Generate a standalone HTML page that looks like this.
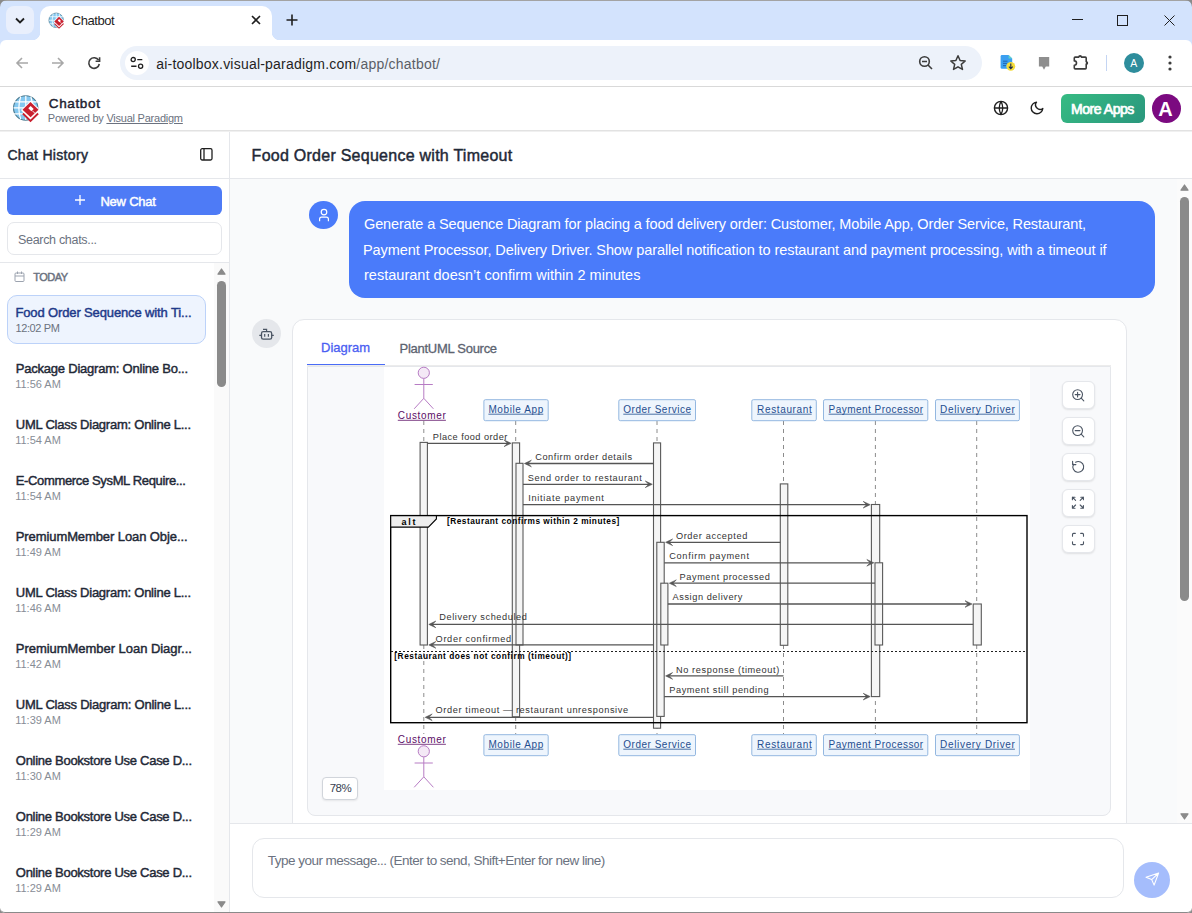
<!DOCTYPE html>
<html><head><meta charset="utf-8">
<style>
*{box-sizing:border-box;margin:0;padding:0}
html,body{width:1192px;height:913px;overflow:hidden;background:#fff;font-family:"Liberation Sans",sans-serif;position:relative}
.a{position:absolute}
.t{position:absolute;white-space:nowrap;line-height:1}
svg{position:absolute;overflow:visible}
</style></head>
<body>
<!-- ============ BROWSER CHROME ============ -->
<div class="a" style="left:0;top:0;width:1192px;height:48px;background:#d3e3fd;border-top:1px solid #a3a3a3"></div>
<!-- tab search button -->
<div class="a" style="left:6px;top:6px;width:28px;height:28px;border-radius:8px;background:#e9effc"></div>
<svg style="left:14px;top:14px" width="12" height="12"><path d="M2 4.5 L6 8.5 L10 4.5" fill="none" stroke="#1f1f1f" stroke-width="1.8"/></svg>
<!-- active tab -->
<div class="a" style="left:40px;top:6px;width:232px;height:40px;background:#fff;border-radius:10px 10px 0 0"></div>
<div class="a" style="left:32px;top:32px;width:8px;height:8px;background:radial-gradient(circle at 0 0,#d3e3fd 8px,#fff 8.6px)"></div>
<div class="a" style="left:272px;top:32px;width:8px;height:8px;background:radial-gradient(circle at 8px 0,#d3e3fd 8px,#fff 8.6px)"></div>
<!-- favicon --><svg style="left:48px;top:12px" width="17" height="17" viewBox="11.5 93.5 28.5 28.5"><circle cx="25.2" cy="107.4" r="12.2" fill="#84c8f0" stroke="#4d7b90" stroke-width="1.1"/><path d="M13.5 101.4H37M13 107.4H37.5M13.5 113.3H37M25.3 95.3V119.5M20.2 96Q16.5 107.4 20.2 118.8M30.3 96Q34 107.4 30.3 118.8" stroke="#fff" stroke-width="1.2" fill="none"/><path d="M30 100L39.5 109.4L30 122.3L20.5 109.4Z" fill="#fff"/><path d="M30 101.6L38 109.3L30.1 116.8L22 109.3Z" fill="#c9202f"/><path d="M30.2 105.4L33.2 108.4L30.8 110.8L27.8 107.8Z" fill="#fff"/><path d="M31.8 110.2L35 113.4" stroke="#fff" stroke-width="0.9"/><path d="M22.4 113L30 120.4L37.6 113" fill="none" stroke="#c9202f" stroke-width="1.9"/></svg>
<div class="t" id="tabtitle" style="left:71.80px;top:14px;font-size:13px;letter-spacing:-0.433px;color:#1f1f1f">Chatbot</div>
<svg style="left:251px;top:15px" width="10" height="10"><path d="M1 1L9 9M9 1L1 9" stroke="#1f1f1f" stroke-width="1.6"/></svg>
<svg style="left:286px;top:14px" width="12" height="12"><path d="M6 0.5V11.5M0.5 6H11.5" stroke="#1f1f1f" stroke-width="1.6"/></svg>
<!-- window controls -->
<div class="a" style="left:1072px;top:19px;width:11px;height:1px;background:#1f1f1f"></div>
<svg style="left:1117px;top:15px" width="11" height="11"><rect x="0.5" y="0.5" width="10" height="10" fill="none" stroke="#1f1f1f" stroke-width="1"/></svg>
<svg style="left:1164px;top:15px" width="11" height="11"><path d="M0.5 0.5L10.5 10.5M10.5 0.5L0.5 10.5" stroke="#1f1f1f" stroke-width="1"/></svg>

<!-- toolbar -->
<div class="a" style="left:0;top:40px;width:1192px;height:46px;background:#fff;border-radius:6px 6px 0 0"></div>
<div class="a" style="left:0;top:86px;width:1192px;height:1px;background:#d9d9d9"></div>
<svg style="left:15px;top:56px" width="14" height="14"><path d="M13 7H2M7 2L2 7L7 12" fill="none" stroke="#a8a8a8" stroke-width="1.6"/></svg>
<svg style="left:51px;top:56px" width="14" height="14"><path d="M1 7H12M7 2L12 7L7 12" fill="none" stroke="#a8a8a8" stroke-width="1.6"/></svg>
<svg style="left:87px;top:56px" width="14" height="14"><path d="M11.6 4.2A5.3 5.3 0 1 0 12.3 8" fill="none" stroke="#3c3c3c" stroke-width="1.6"/><path d="M12.6 1.2V5.2H8.6" fill="none" stroke="#3c3c3c" stroke-width="1.6"/></svg>
<div class="a" style="left:120px;top:46px;width:862px;height:34px;border-radius:17px;background:#edf2fa"></div>
<div class="a" style="left:125px;top:51px;width:24px;height:24px;border-radius:12px;background:#fff"></div>
<svg style="left:129px;top:55px" width="16" height="16"><circle cx="4.2" cy="4.6" r="2.1" fill="none" stroke="#1f1f1f" stroke-width="1.3"/><path d="M8.3 4.6H13.3M2.2 11.3H7.5" stroke="#1f1f1f" stroke-width="1.4"/><circle cx="11.6" cy="11.3" r="2.1" fill="none" stroke="#1f1f1f" stroke-width="1.3"/></svg>
<div class="t" id="url" style="left:156.20px;top:57px;font-size:14px;letter-spacing:0.214px;color:#1f1f1f">ai-toolbox.visual-paradigm.com<span style="color:#5b5e66">/app/chatbot/</span></div>
<svg style="left:918px;top:55px" width="16" height="16"><circle cx="6.5" cy="6.5" r="4.8" fill="none" stroke="#3c3c3c" stroke-width="1.6"/><path d="M4 6.5H9M10 10L14 14" stroke="#3c3c3c" stroke-width="1.6"/></svg>
<svg style="left:949px;top:54px" width="18" height="18"><path d="M9 1.8L11.1 6.5L16.2 7L12.3 10.4L13.5 15.4L9 12.8L4.5 15.4L5.7 10.4L1.8 7L6.9 6.5Z" fill="none" stroke="#3c3c3c" stroke-width="1.5" stroke-linejoin="round"/></svg>
<!-- extension icons -->
<svg style="left:995px;top:50px" width="25" height="25" viewBox="995 50 25 25"><path d="M1002 55H1008.6L1012.2 58.6V67.4Q1012.2 68.8 1010.8 68.8H1002Q1000.6 68.8 1000.6 67.4V56.4Q1000.6 55 1002 55Z" fill="#3b9ff0"/><path d="M1008.6 55L1012.2 58.6H1008.6Z" fill="#5fd6c8"/><path d="M1003 61.2H1007.5M1003 63.4H1007.5M1003 65.6H1006" stroke="#1f5fa8" stroke-width="0.9"/><circle cx="1010.8" cy="66.3" r="4.4" fill="#f5dc3a"/><path d="M1010.8 63.4V68.4M1008.9 66.6L1010.8 68.6L1012.7 66.6" fill="none" stroke="#1e2a4a" stroke-width="1.1"/></svg>
<svg style="left:1035px;top:52px" width="18" height="20" viewBox="1035 52 18 20"><path d="M1038.9 56.9H1049.2V66.5H1045.8L1044 69.7L1042.2 66.5H1038.9Z" fill="#8e8e8e"/></svg>
<svg style="left:1068px;top:50px" width="25" height="25" viewBox="1068 50 25 25"><path d="M1075.2 57.1H1078.9A1.2 1.2 0 0 1 1081.3 57.1H1085.3Q1086.2 57.1 1086.2 58V61.7A1.2 1.2 0 0 1 1086.2 64.1V68Q1086.2 68.9 1085.3 68.9H1075.2Q1074.3 68.9 1074.3 68V65.3A2.2 2.2 0 0 0 1074.3 60.9V58Q1074.3 57.1 1075.2 57.1Z" fill="none" stroke="#3c3c3c" stroke-width="1.6" stroke-linejoin="round"/><path d="M1078.9 57.1A1.2 1.2 0 0 1 1081.3 57.1Z M1086.2 61.7A1.2 1.2 0 0 1 1086.2 64.1Z" fill="#3c3c3c"/></svg>
<div class="a" style="left:1106px;top:55px;width:1px;height:16px;background:#c4d5f3"></div>
<div class="a" style="left:1124px;top:53px;width:20px;height:20px;border-radius:10px;background:#2e8d9c"></div>
<div class="t" id="profA" style="left:1130.20px;top:58px;font-size:10.5px;letter-spacing:0.000px;color:#fff">A</div>
<svg style="left:1168px;top:55px" width="4" height="16"><circle cx="2" cy="2" r="1.6" fill="#3c3c3c"/><circle cx="2" cy="8" r="1.6" fill="#3c3c3c"/><circle cx="2" cy="14" r="1.6" fill="#3c3c3c"/></svg>

<!-- ============ APP HEADER ============ -->
<div class="a" style="left:0;top:87px;width:1192px;height:43px;background:#fff"></div>
<div class="a" style="left:0;top:130px;width:1192px;height:1px;background:#e2e2e2"></div>
<div class="a" style="left:0;top:131px;width:1192px;height:1px;background:#f0f0f0"></div>
<svg style="left:11.5px;top:93.5px" width="28.5" height="28.5" viewBox="11.5 93.5 28.5 28.5"><circle cx="25.2" cy="107.4" r="12.2" fill="#84c8f0" stroke="#4d7b90" stroke-width="1.1"/><path d="M13.5 101.4H37M13 107.4H37.5M13.5 113.3H37M25.3 95.3V119.5M20.2 96Q16.5 107.4 20.2 118.8M30.3 96Q34 107.4 30.3 118.8" stroke="#fff" stroke-width="1.2" fill="none"/><path d="M30 100L39.5 109.4L30 122.3L20.5 109.4Z" fill="#fff"/><path d="M30 101.6L38 109.3L30.1 116.8L22 109.3Z" fill="#c9202f"/><path d="M30.2 105.4L33.2 108.4L30.8 110.8L27.8 107.8Z" fill="#fff"/><path d="M31.8 110.2L35 113.4" stroke="#fff" stroke-width="0.9"/><path d="M22.4 113L30 120.4L37.6 113" fill="none" stroke="#c9202f" stroke-width="1.9"/></svg>
<div class="t" id="appname" style="left:48.80px;top:97px;font-size:13.5px;letter-spacing:0.633px;font-weight:normal;-webkit-text-stroke:0.45px currentColor;color:#1e2230">Chatbot</div>
<div class="t" id="powered" style="left:47.80px;top:113px;font-size:11px;letter-spacing:-0.232px;color:#6b7280">Powered by <span style="text-decoration:underline">Visual Paradigm</span></div>
<svg style="left:993px;top:100px" width="16" height="16" viewBox="0 0 16 16"><circle cx="8" cy="8" r="6.6" fill="none" stroke="#1f1f1f" stroke-width="1.4"/><path d="M1.5 8H14.5M8 1.4Q4.5 8 8 14.6M8 1.4Q11.5 8 8 14.6" fill="none" stroke="#1f1f1f" stroke-width="1.3"/></svg>
<svg style="left:1030px;top:101px" width="14" height="14" viewBox="0 0 14 14"><path d="M6.5 1.2A5.8 5.8 0 1 0 12.8 7.5A4.5 4.5 0 0 1 6.5 1.2Z" fill="none" stroke="#1f1f1f" stroke-width="1.4" stroke-linejoin="round"/></svg>
<div class="a" style="left:1061px;top:94px;width:84px;height:29px;border-radius:6px;background:linear-gradient(135deg,#36bb83,#2a977d)"></div>
<div class="t" id="moreapps" style="left:1071.00px;top:102px;font-size:14px;letter-spacing:-0.450px;font-weight:normal;-webkit-text-stroke:0.7px currentColor;color:#fff">More Apps</div>
<div class="a" style="left:1152px;top:94px;width:29px;height:29px;border-radius:50%;background:#7b0a80"></div>
<div class="t" id="avA" style="left:1158.20px;top:99px;font-size:20px;letter-spacing:0.000px;font-weight:bold;color:#fff">A</div>

<!-- ============ SIDEBAR ============ -->
<div class="a" style="left:0;top:132px;width:229px;height:781px;background:#fff"></div>
<div class="a" style="left:229px;top:132px;width:1px;height:781px;background:#e5e7eb"></div>
<div class="t" id="chathist" style="left:7.40px;top:148px;font-size:14px;letter-spacing:0.318px;font-weight:normal;-webkit-text-stroke:0.45px currentColor;color:#1f2937">Chat History</div>
<svg style="left:200px;top:148px" width="13" height="13"><rect x="0.7" y="0.7" width="11.3" height="11.3" rx="1.5" fill="none" stroke="#1f1f1f" stroke-width="1.3"/><path d="M4 1V12" stroke="#1f1f1f" stroke-width="1.3"/></svg>
<div class="a" style="left:0;top:178px;width:229px;height:1px;background:#e5e7eb"></div>
<div class="a" style="left:7px;top:186px;width:215px;height:29px;border-radius:6px;background:#4e7bf6"></div>
<svg style="left:75px;top:195px" width="10" height="10"><path d="M5 0V10M0 5H10" stroke="#fff" stroke-width="1.3"/></svg>
<div class="t" id="newchat" style="left:100.40px;top:195px;font-size:13px;letter-spacing:-0.214px;font-weight:normal;-webkit-text-stroke:0.45px currentColor;color:#fff">New Chat</div>
<div class="a" style="left:7px;top:222px;width:215px;height:33px;border-radius:7px;border:1px solid #e5e7eb;background:#fff"></div>
<div class="t" id="search" style="left:18.00px;top:234px;font-size:12.5px;letter-spacing:-0.307px;color:#6b7280">Search chats...</div>
<div class="a" style="left:0;top:262px;width:229px;height:1px;background:#e5e7eb"></div>
<svg style="left:14px;top:271px" width="11" height="11"><rect x="1" y="2" width="9" height="8.5" rx="1" fill="none" stroke="#9ca3af" stroke-width="1"/><path d="M1 5H10M3.5 0.5V3M7.5 0.5V3" stroke="#9ca3af" stroke-width="1"/></svg>
<div class="t" id="today" style="left:33.20px;top:272px;font-size:11px;letter-spacing:-0.500px;font-weight:normal;-webkit-text-stroke:0.45px currentColor;color:#6b7280">TODAY</div>
<!-- sidebar scrollbar -->
<div class="a" style="left:214px;top:263px;width:15px;height:650px;background:#fafafa"></div>
<svg style="left:217px;top:268px" width="9" height="7"><path d="M4.5 1L8 6.2H1Z" fill="#8a8a8a" stroke="#8a8a8a" stroke-width="1.2" stroke-linejoin="round"/></svg>
<div class="a" style="left:217px;top:281px;width:9px;height:106px;border-radius:4.5px;background:#8a8a8a"></div>
<svg style="left:217px;top:901px" width="9" height="7"><path d="M1 0.8H8L4.5 6Z" fill="#8a8a8a" stroke="#8a8a8a" stroke-width="1.2" stroke-linejoin="round"/></svg>
<!-- active item -->
<div class="a" style="left:7px;top:295px;width:199px;height:49px;border-radius:10px;background:#eef4fe;border:1px solid #bcd2f9"></div>
<div class="t" id="it0" style="left:15.40px;top:306px;font-size:13px;letter-spacing:-0.128px;font-weight:normal;-webkit-text-stroke:0.45px currentColor;color:#1e3a8a">Food Order Sequence with Ti...</div>
<div class="t" id="tm0" style="left:15.40px;top:323px;font-size:11px;letter-spacing:-0.357px;color:#6b7280">12:02 PM</div>
<div id="items">
<div class="t" id="it1" style="left:15.80px;top:362px;font-size:13px;letter-spacing:-0.221px;font-weight:normal;-webkit-text-stroke:0.45px currentColor;color:#1f2937">Package Diagram: Online Bo...</div>
<div class="t" id="tm1" style="left:15.20px;top:379px;font-size:11px;letter-spacing:0.000px;color:#878d96">11:56 AM</div>
<div class="t" id="it2" style="left:15.80px;top:418px;font-size:13px;letter-spacing:-0.241px;font-weight:normal;-webkit-text-stroke:0.45px currentColor;color:#1f2937">UML Class Diagram: Online L...</div>
<div class="t" id="tm2" style="left:15.20px;top:435px;font-size:11px;letter-spacing:0.000px;color:#878d96">11:54 AM</div>
<div class="t" id="it3" style="left:15.80px;top:474px;font-size:13px;letter-spacing:-0.358px;font-weight:normal;-webkit-text-stroke:0.45px currentColor;color:#1f2937">E-Commerce SysML Require...</div>
<div class="t" id="tm3" style="left:15.20px;top:491px;font-size:11px;letter-spacing:0.000px;color:#878d96">11:54 AM</div>
<div class="t" id="it4" style="left:15.80px;top:530px;font-size:13px;letter-spacing:-0.096px;font-weight:normal;-webkit-text-stroke:0.45px currentColor;color:#1f2937">PremiumMember Loan Obje...</div>
<div class="t" id="tm4" style="left:15.20px;top:547px;font-size:11px;letter-spacing:0.000px;color:#878d96">11:49 AM</div>
<div class="t" id="it5" style="left:15.80px;top:586px;font-size:13px;letter-spacing:-0.241px;font-weight:normal;-webkit-text-stroke:0.45px currentColor;color:#1f2937">UML Class Diagram: Online L...</div>
<div class="t" id="tm5" style="left:15.20px;top:603px;font-size:11px;letter-spacing:0.000px;color:#878d96">11:46 AM</div>
<div class="t" id="it6" style="left:15.80px;top:642px;font-size:13px;letter-spacing:-0.038px;font-weight:normal;-webkit-text-stroke:0.45px currentColor;color:#1f2937">PremiumMember Loan Diagr...</div>
<div class="t" id="tm6" style="left:15.20px;top:659px;font-size:11px;letter-spacing:0.000px;color:#878d96">11:42 AM</div>
<div class="t" id="it7" style="left:15.80px;top:698px;font-size:13px;letter-spacing:-0.228px;font-weight:normal;-webkit-text-stroke:0.45px currentColor;color:#1f2937">UML Class Diagram: Online L...</div>
<div class="t" id="tm7" style="left:15.20px;top:715px;font-size:11px;letter-spacing:0.000px;color:#878d96">11:39 AM</div>
<div class="t" id="it8" style="left:15.80px;top:754px;font-size:13px;letter-spacing:-0.276px;font-weight:normal;-webkit-text-stroke:0.45px currentColor;color:#1f2937">Online Bookstore Use Case D...</div>
<div class="t" id="tm8" style="left:15.20px;top:771px;font-size:11px;letter-spacing:0.000px;color:#878d96">11:30 AM</div>
<div class="t" id="it9" style="left:15.80px;top:810px;font-size:13px;letter-spacing:-0.276px;font-weight:normal;-webkit-text-stroke:0.45px currentColor;color:#1f2937">Online Bookstore Use Case D...</div>
<div class="t" id="tm9" style="left:15.20px;top:827px;font-size:11px;letter-spacing:0.000px;color:#878d96">11:29 AM</div>
<div class="t" id="it10" style="left:15.80px;top:866px;font-size:13px;letter-spacing:-0.276px;font-weight:normal;-webkit-text-stroke:0.45px currentColor;color:#1f2937">Online Bookstore Use Case D...</div>
<div class="t" id="tm10" style="left:15.20px;top:883px;font-size:11px;letter-spacing:0.000px;color:#878d96">11:29 AM</div>
</div>

<!-- ============ MAIN ============ -->
<div class="a" style="left:230px;top:132px;width:962px;height:46px;background:#fff"></div>
<div class="a" style="left:230px;top:178px;width:962px;height:1px;background:#e5e7eb"></div>
<div class="t" id="title" style="left:251.60px;top:148px;font-size:16px;letter-spacing:0.258px;font-weight:normal;-webkit-text-stroke:0.45px currentColor;color:#1f2937">Food Order Sequence with Timeout</div>
<div class="a" style="left:230px;top:179px;width:962px;height:644px;background:#f9fafb"></div>
<!-- main scrollbar -->
<div class="a" style="left:1177px;top:179px;width:15px;height:644px;background:#fbfbfb"></div>
<svg style="left:1180px;top:184px" width="9" height="7"><path d="M4.5 1L8 6.2H1Z" fill="#8a8a8a" stroke="#8a8a8a" stroke-width="1.2" stroke-linejoin="round"/></svg>
<div class="a" style="left:1180px;top:197px;width:9px;height:404px;border-radius:4.5px;background:#8a8a8a"></div>
<svg style="left:1180px;top:813px" width="9" height="7"><path d="M1 0.8H8L4.5 6Z" fill="#8a8a8a" stroke="#8a8a8a" stroke-width="1.2" stroke-linejoin="round"/></svg>

<!-- user message -->
<div class="a" style="left:309px;top:200.7px;width:29px;height:28.5px;border-radius:50%;background:#4a7bfa"></div>
<svg style="left:300px;top:195px" width="45" height="40" viewBox="300 195 45 40"><circle cx="324" cy="212.1" r="2.8" fill="none" stroke="#fff" stroke-width="1.2"/><path d="M319.6 221.2V219.2Q319.6 217.2 321.6 217.2H326.4Q328.4 217.2 328.4 219.2V221.2" fill="none" stroke="#fff" stroke-width="1.2"/></svg>
<div class="a" style="left:349px;top:201px;width:806px;height:97px;border-radius:16px;background:#4a7bfa"></div>
<div class="t" id="msg1" style="left:364.00px;top:217px;font-size:14.5px;letter-spacing:-0.147px;color:#fff">Generate a Sequence Diagram for placing a food delivery order: Customer, Mobile App, Order Service, Restaurant,</div>
<div class="t" id="msg2" style="left:363.00px;top:243px;font-size:14.5px;letter-spacing:-0.078px;color:#fff">Payment Processor, Delivery Driver. Show parallel notification to restaurant and payment processing, with a timeout if</div>
<div class="t" id="msg3" style="left:364.00px;top:268px;font-size:14.5px;letter-spacing:0.019px;color:#fff">restaurant doesn’t confirm within 2 minutes</div>

<!-- bot -->
<div class="a" style="left:252px;top:319px;width:29px;height:29px;border-radius:50%;background:#e5e7eb"></div>
<svg style="left:250px;top:320px" width="30" height="30" viewBox="250 320 30 30"><rect x="261.5" y="331.7" width="10.2" height="7.5" rx="1.8" fill="none" stroke="#4b5563" stroke-width="1.3"/><path d="M266.6 331.7V329.3H263M259.3 335.4H261.5M271.7 335.4H273.8M264.7 334V336.8M268.4 334V336.8" fill="none" stroke="#4b5563" stroke-width="1.2"/></svg>
<div class="a" style="left:292px;top:319px;width:835px;height:530px;border-radius:12px;background:#fff;border:1px solid #e5e7eb"></div>
<div class="a" style="left:307px;top:365px;width:804px;height:1px;background:#ececec"></div>
<div class="a" style="left:307px;top:363.6px;width:78px;height:1.6px;background:#4a6cf7"></div>
<div class="t" id="tabdiag" style="left:321.00px;top:341px;font-size:13px;letter-spacing:0.000px;color:#4a5ef2;-webkit-text-stroke:0.3px currentColor">Diagram</div>
<div class="t" id="tabsrc" style="left:399.60px;top:342px;font-size:13px;letter-spacing:-0.279px;color:#5c6370;-webkit-text-stroke:0.3px currentColor">PlantUML Source</div>
<div class="a" style="left:307px;top:366px;width:804px;height:450px;background:#f8f9fb;border:1px solid #e5e7eb;border-radius:0 0 8px 8px"></div>
<div class="a" style="left:384px;top:367px;width:646px;height:423px;background:#fff"></div>
<div id="diagram"><svg style="left:384px;top:367px" width="646" height="423" viewBox="0 0 646 423" font-family="Liberation Sans, sans-serif">
<line x1="39.8" y1="54" x2="39.8" y2="367" stroke="#8c8c8c" stroke-width="1" stroke-dasharray="4,4"/>
<line x1="131.7" y1="54" x2="131.7" y2="367" stroke="#8c8c8c" stroke-width="1" stroke-dasharray="4,4"/>
<line x1="273.0" y1="54" x2="273.0" y2="367" stroke="#8c8c8c" stroke-width="1" stroke-dasharray="4,4"/>
<line x1="399.5" y1="54" x2="399.5" y2="367" stroke="#8c8c8c" stroke-width="1" stroke-dasharray="4,4"/>
<line x1="491.4" y1="54" x2="491.4" y2="367" stroke="#8c8c8c" stroke-width="1" stroke-dasharray="4,4"/>
<line x1="592.7" y1="54" x2="592.7" y2="367" stroke="#8c8c8c" stroke-width="1" stroke-dasharray="4,4"/>
<rect x="99.9" y="32.7" width="64.3" height="21" rx="1.5" fill="#eef5fd" stroke="#93b7e0" stroke-width="1"/>
<text x="104.4" y="46" font-size="10" fill="#1f4e8f" textLength="54.9" lengthAdjust="spacing">Mobile App</text>
<line x1="104.4" y1="47.2" x2="159.3" y2="47.2" stroke="#1f4e8f" stroke-width="0.8"/>
<rect x="234.8" y="32.7" width="76.7" height="21" rx="1.5" fill="#eef5fd" stroke="#93b7e0" stroke-width="1"/>
<text x="239.3" y="46" font-size="10" fill="#1f4e8f" textLength="67.7" lengthAdjust="spacing">Order Service</text>
<line x1="239.3" y1="47.2" x2="307.0" y2="47.2" stroke="#1f4e8f" stroke-width="0.8"/>
<rect x="367.8" y="32.7" width="64.5" height="21" rx="1.5" fill="#eef5fd" stroke="#93b7e0" stroke-width="1"/>
<text x="373.1" y="46" font-size="10" fill="#1f4e8f" textLength="54.6" lengthAdjust="spacing">Restaurant</text>
<line x1="373.1" y1="47.2" x2="427.7" y2="47.2" stroke="#1f4e8f" stroke-width="0.8"/>
<rect x="439.5" y="32.7" width="104.3" height="21" rx="1.5" fill="#eef5fd" stroke="#93b7e0" stroke-width="1"/>
<text x="444.6" y="46" font-size="10" fill="#1f4e8f" textLength="94.6" lengthAdjust="spacing">Payment Processor</text>
<line x1="444.6" y1="47.2" x2="539.2" y2="47.2" stroke="#1f4e8f" stroke-width="0.8"/>
<rect x="551.5" y="32.7" width="83.9" height="21" rx="1.5" fill="#eef5fd" stroke="#93b7e0" stroke-width="1"/>
<text x="556.1" y="46" font-size="10" fill="#1f4e8f" textLength="74.8" lengthAdjust="spacing">Delivery Driver</text>
<line x1="556.1" y1="47.2" x2="630.9" y2="47.2" stroke="#1f4e8f" stroke-width="0.8"/>
<rect x="99.9" y="367.7" width="64.3" height="21" rx="1.5" fill="#eef5fd" stroke="#93b7e0" stroke-width="1"/>
<text x="104.4" y="381" font-size="10" fill="#1f4e8f" textLength="54.9" lengthAdjust="spacing">Mobile App</text>
<line x1="104.4" y1="382.2" x2="159.3" y2="382.2" stroke="#1f4e8f" stroke-width="0.8"/>
<rect x="234.8" y="367.7" width="76.7" height="21" rx="1.5" fill="#eef5fd" stroke="#93b7e0" stroke-width="1"/>
<text x="239.3" y="381" font-size="10" fill="#1f4e8f" textLength="67.7" lengthAdjust="spacing">Order Service</text>
<line x1="239.3" y1="382.2" x2="307.0" y2="382.2" stroke="#1f4e8f" stroke-width="0.8"/>
<rect x="367.8" y="367.7" width="64.5" height="21" rx="1.5" fill="#eef5fd" stroke="#93b7e0" stroke-width="1"/>
<text x="373.1" y="381" font-size="10" fill="#1f4e8f" textLength="54.6" lengthAdjust="spacing">Restaurant</text>
<line x1="373.1" y1="382.2" x2="427.7" y2="382.2" stroke="#1f4e8f" stroke-width="0.8"/>
<rect x="439.5" y="367.7" width="104.3" height="21" rx="1.5" fill="#eef5fd" stroke="#93b7e0" stroke-width="1"/>
<text x="444.6" y="381" font-size="10" fill="#1f4e8f" textLength="94.6" lengthAdjust="spacing">Payment Processor</text>
<line x1="444.6" y1="382.2" x2="539.2" y2="382.2" stroke="#1f4e8f" stroke-width="0.8"/>
<rect x="551.5" y="367.7" width="83.9" height="21" rx="1.5" fill="#eef5fd" stroke="#93b7e0" stroke-width="1"/>
<text x="556.1" y="381" font-size="10" fill="#1f4e8f" textLength="74.8" lengthAdjust="spacing">Delivery Driver</text>
<line x1="556.1" y1="382.2" x2="630.9" y2="382.2" stroke="#1f4e8f" stroke-width="0.8"/>
<circle cx="39.8" cy="5.8" r="5.6" fill="#f4e9f6" stroke="#b77cc4" stroke-width="1"/>
<line x1="39.8" y1="11.6" x2="39.8" y2="31.3" stroke="#b77cc4" stroke-width="1"/>
<line x1="30.6" y1="17.5" x2="48.8" y2="17.5" stroke="#b77cc4" stroke-width="1"/>
<path d="M30.2 41.8 L39.8 31.3 L49.4 41.8" fill="none" stroke="#b77cc4" stroke-width="1"/>
<circle cx="39.8" cy="384.3" r="5.6" fill="#f4e9f6" stroke="#b77cc4" stroke-width="1"/>
<line x1="39.8" y1="390.1" x2="39.8" y2="409.8" stroke="#b77cc4" stroke-width="1"/>
<line x1="30.6" y1="396.0" x2="48.8" y2="396.0" stroke="#b77cc4" stroke-width="1"/>
<path d="M30.2 420.3 L39.8 409.8 L49.4 420.3" fill="none" stroke="#b77cc4" stroke-width="1"/>
<text x="13.8" y="52" font-size="10" fill="#5c0d66" textLength="48.1" lengthAdjust="spacing">Customer</text>
<line x1="13.8" y1="53.3" x2="61.9" y2="53.3" stroke="#5c0d66" stroke-width="0.8"/>
<text x="13.8" y="376" font-size="10" fill="#5c0d66" textLength="48.1" lengthAdjust="spacing">Customer</text>
<line x1="13.8" y1="377.3" x2="61.9" y2="377.3" stroke="#5c0d66" stroke-width="0.8"/>
<rect x="36.1" y="75.4" width="7.3" height="202.6" fill="#f5f5f5" stroke="#595959" stroke-width="1.1"/>
<rect x="128.3" y="75.9" width="7.3" height="273.9" fill="#f5f5f5" stroke="#595959" stroke-width="1.1"/>
<rect x="132.0" y="96.3" width="7.0" height="181.7" fill="#f5f5f5" stroke="#595959" stroke-width="1.1"/>
<rect x="269.5" y="75.9" width="7.1" height="285.3" fill="#f5f5f5" stroke="#595959" stroke-width="1.1"/>
<rect x="272.8" y="175.3" width="7.4" height="174.1" fill="#f5f5f5" stroke="#595959" stroke-width="1.1"/>
<rect x="276.8" y="216.2" width="7.1" height="61.8" fill="#f5f5f5" stroke="#595959" stroke-width="1.1"/>
<rect x="396.3" y="116.9" width="7.5" height="161.4" fill="#f5f5f5" stroke="#595959" stroke-width="1.1"/>
<rect x="487.4" y="137.5" width="8.3" height="192.1" fill="#f5f5f5" stroke="#595959" stroke-width="1.1"/>
<rect x="491.0" y="195.8" width="7.6" height="82.2" fill="#f5f5f5" stroke="#595959" stroke-width="1.1"/>
<rect x="589.2" y="237.0" width="8.1" height="41.0" fill="#f5f5f5" stroke="#595959" stroke-width="1.1"/>
<rect x="6.7" y="148.6" width="636.3" height="207.1" fill="none" stroke="#000" stroke-width="1.4"/>
<path d="M6.7 148.6 H52.4 V152 L44.4 160.1 H6.7 Z" fill="#eeeeee" stroke="#000" stroke-width="1.1"/>
<text x="17.4" y="157.6" font-size="9" font-weight="bold" fill="#000" textLength="14" lengthAdjust="spacing">alt</text>
<text x="62.9" y="157.4" font-size="8.3" font-weight="bold" fill="#000" textLength="172.4" lengthAdjust="spacing">[Restaurant confirms within 2 minutes]</text>
<line x1="7" y1="284.5" x2="642.5" y2="284.5" stroke="#222" stroke-width="1" stroke-dasharray="2,2"/>
<text x="10.3" y="291.9" font-size="8.3" font-weight="bold" fill="#000" textLength="176.8" lengthAdjust="spacing">[Restaurant does not confirm (timeout)]</text>
<line x1="43.4" y1="76.3" x2="125.1" y2="76.3" stroke="#555555" stroke-width="1.3"/>
<path d="M127.10000000000001 76.3 L120.1 73.0 L123.5 76.3 L120.1 79.6 Z" fill="#555555" stroke="#555555" stroke-width="0.6" stroke-linejoin="round"/>
<text x="48.8" y="72.9" font-size="9.2" fill="#333333" textLength="74.5" lengthAdjust="spacing">Place food order</text>
<line x1="269.5" y1="96.5" x2="142.4" y2="96.5" stroke="#555555" stroke-width="1.3"/>
<path d="M140.4 96.5 L147.4 93.2 L144.0 96.5 L147.4 99.8 Z" fill="#555555" stroke="#555555" stroke-width="0.6" stroke-linejoin="round"/>
<text x="151.2" y="92.6" font-size="9.2" fill="#333333" textLength="96.8" lengthAdjust="spacing">Confirm order details</text>
<line x1="139.0" y1="117.3" x2="266.3" y2="117.3" stroke="#555555" stroke-width="1.3"/>
<path d="M268.3 117.3 L261.3 114.0 L264.7 117.3 L261.3 120.6 Z" fill="#555555" stroke="#555555" stroke-width="0.6" stroke-linejoin="round"/>
<text x="143.7" y="113.6" font-size="9.2" fill="#333333" textLength="114.1" lengthAdjust="spacing">Send order to restaurant</text>
<line x1="139.0" y1="137.7" x2="484.2" y2="137.7" stroke="#555555" stroke-width="1.3"/>
<path d="M486.2 137.7 L479.2 134.39999999999998 L482.6 137.7 L479.2 141.0 Z" fill="#555555" stroke="#555555" stroke-width="0.6" stroke-linejoin="round"/>
<text x="144.2" y="133.9" font-size="9.2" fill="#333333" textLength="75.6" lengthAdjust="spacing">Initiate payment</text>
<line x1="396.3" y1="175.3" x2="283.6" y2="175.3" stroke="#555555" stroke-width="1.3"/>
<path d="M281.59999999999997 175.3 L288.6 172.0 L285.2 175.3 L288.6 178.60000000000002 Z" fill="#555555" stroke="#555555" stroke-width="0.6" stroke-linejoin="round"/>
<text x="291.9" y="171.6" font-size="9.2" fill="#333333" textLength="71.5" lengthAdjust="spacing">Order accepted</text>
<line x1="280.2" y1="195.8" x2="487.8" y2="195.8" stroke="#555555" stroke-width="1.3"/>
<path d="M489.8 195.8 L482.8 192.5 L486.2 195.8 L482.8 199.10000000000002 Z" fill="#555555" stroke="#555555" stroke-width="0.6" stroke-linejoin="round"/>
<text x="285.2" y="191.7" font-size="9.2" fill="#333333" textLength="79.8" lengthAdjust="spacing">Confirm payment</text>
<line x1="491.0" y1="216.2" x2="287.3" y2="216.2" stroke="#555555" stroke-width="1.3"/>
<path d="M285.29999999999995 216.2 L292.3 212.89999999999998 L288.9 216.2 L292.3 219.5 Z" fill="#555555" stroke="#555555" stroke-width="0.6" stroke-linejoin="round"/>
<text x="295.6" y="212.9" font-size="9.2" fill="#333333" textLength="90.3" lengthAdjust="spacing">Payment processed</text>
<line x1="283.9" y1="237.0" x2="586.0" y2="237.0" stroke="#555555" stroke-width="1.3"/>
<path d="M588.0 237.0 L581.0 233.7 L584.4 237.0 L581.0 240.3 Z" fill="#555555" stroke="#555555" stroke-width="0.6" stroke-linejoin="round"/>
<text x="288.6" y="232.7" font-size="9.2" fill="#333333" textLength="69.7" lengthAdjust="spacing">Assign delivery</text>
<line x1="589.2" y1="257.4" x2="46.8" y2="257.4" stroke="#555555" stroke-width="1.3"/>
<path d="M44.8 257.4 L51.8 254.09999999999997 L48.4 257.4 L51.8 260.7 Z" fill="#555555" stroke="#555555" stroke-width="0.6" stroke-linejoin="round"/>
<text x="55.3" y="253.4" font-size="9.2" fill="#333333" textLength="87.6" lengthAdjust="spacing">Delivery scheduled</text>
<line x1="269.5" y1="277.9" x2="46.8" y2="277.9" stroke="#555555" stroke-width="1.3"/>
<path d="M44.8 277.9 L51.8 274.59999999999997 L48.4 277.9 L51.8 281.2 Z" fill="#555555" stroke="#555555" stroke-width="0.6" stroke-linejoin="round"/>
<text x="51.6" y="274.8" font-size="9.2" fill="#333333" textLength="75.6" lengthAdjust="spacing">Order confirmed</text>
<line x1="399.5" y1="308.9" x2="283.6" y2="308.9" stroke="#555555" stroke-width="1.3"/>
<path d="M281.59999999999997 308.9 L288.6 305.59999999999997 L285.2 308.9 L288.6 312.2 Z" fill="#555555" stroke="#555555" stroke-width="0.6" stroke-linejoin="round"/>
<text x="291.9" y="305.8" font-size="9.2" fill="#333333" textLength="103.4" lengthAdjust="spacing">No response (timeout)</text>
<line x1="280.2" y1="329.6" x2="484.2" y2="329.6" stroke="#555555" stroke-width="1.3"/>
<path d="M486.2 329.6 L479.2 326.3 L482.6 329.6 L479.2 332.90000000000003 Z" fill="#555555" stroke="#555555" stroke-width="0.6" stroke-linejoin="round"/>
<text x="285.2" y="326.0" font-size="9.2" fill="#333333" textLength="99.3" lengthAdjust="spacing">Payment still pending</text>
<line x1="269.5" y1="350.3" x2="43.2" y2="350.3" stroke="#555555" stroke-width="1.3"/>
<path d="M41.199999999999996 350.3 L48.2 347.0 L44.8 350.3 L48.2 353.6 Z" fill="#555555" stroke="#555555" stroke-width="0.6" stroke-linejoin="round"/>
<text x="51.6" y="346.3" font-size="9.2" fill="#333333" textLength="192.5" lengthAdjust="spacing">Order timeout — restaurant unresponsive</text>
</svg></div><!--/diagram-->

<!-- zoom controls -->
<div id="zc"><div class="a" style="left:1062px;top:381px;width:33px;height:28px;border-radius:6px;background:#fff;border:1px solid #e5e7eb;box-shadow:0 1px 2px rgba(0,0,0,.10)"></div><div class="a" style="left:1062px;top:417px;width:33px;height:28px;border-radius:6px;background:#fff;border:1px solid #e5e7eb;box-shadow:0 1px 2px rgba(0,0,0,.10)"></div><div class="a" style="left:1062px;top:453px;width:33px;height:28px;border-radius:6px;background:#fff;border:1px solid #e5e7eb;box-shadow:0 1px 2px rgba(0,0,0,.10)"></div><div class="a" style="left:1062px;top:489px;width:33px;height:28px;border-radius:6px;background:#fff;border:1px solid #e5e7eb;box-shadow:0 1px 2px rgba(0,0,0,.10)"></div><div class="a" style="left:1062px;top:525px;width:33px;height:28px;border-radius:6px;background:#fff;border:1px solid #e5e7eb;box-shadow:0 1px 2px rgba(0,0,0,.10)"></div><svg style="left:1062px;top:380px" width="34" height="180" viewBox="1062 380 34 180">
<circle cx="1077.6" cy="394.6" r="4.9" fill="none" stroke="#4b5563" stroke-width="1.1"/><path d="M1081.2 398.2L1083.8 400.8M1075.2 394.6H1080M1077.6 392.2V397" stroke="#4b5563" stroke-width="1.1" fill="none" stroke-linecap="round"/>
<circle cx="1077.6" cy="430.6" r="4.9" fill="none" stroke="#4b5563" stroke-width="1.1"/><path d="M1081.2 434.2L1083.8 436.8M1075.2 430.6H1080" stroke="#4b5563" stroke-width="1.1" fill="none" stroke-linecap="round"/>
<path d="M1073.6 464.2A5.4 5.4 0 1 0 1075.6 462.2" fill="none" stroke="#4b5563" stroke-width="1.1" stroke-linecap="round"/><path d="M1072.6 461.3V464.6H1075.9" fill="none" stroke="#4b5563" stroke-width="1.1" stroke-linecap="round" stroke-linejoin="round"/>
<path d="M1072.4 497.2L1075.6 500.4M1072.4 497.2V499.8M1072.4 497.2H1075M1083.4 497.2L1080.2 500.4M1083.4 497.2V499.8M1083.4 497.2H1080.8M1072.4 508.2L1075.6 505M1072.4 508.2V505.6M1072.4 508.2H1075M1083.4 508.2L1080.2 505M1083.4 508.2V505.6M1083.4 508.2H1080.8" fill="none" stroke="#4b5563" stroke-width="1.1" stroke-linecap="round"/>
<path d="M1072.5 536.3V534.4Q1072.5 533.4 1073.5 533.4H1075.3M1080.7 533.4H1082.5Q1083.5 533.4 1083.5 534.4V536.3M1083.5 541.7V543.6Q1083.5 544.6 1082.5 544.6H1080.7M1075.3 544.6H1073.5Q1072.5 544.6 1072.5 543.6V541.7" fill="none" stroke="#4b5563" stroke-width="1.1" stroke-linecap="round"/>
</svg></div>
<div class="a" style="left:322px;top:777px;width:36px;height:23px;border-radius:4px;background:#fff;border:1px solid #d1d5db;box-shadow:0 1px 2px rgba(0,0,0,.08)"></div>
<div class="t" id="pct" style="left:329.80px;top:783px;font-size:11.5px;letter-spacing:-0.600px;color:#374151">78%</div>

<!-- ============ INPUT ============ -->
<div class="a" style="left:230px;top:823px;width:962px;height:90px;background:#fff;border-top:1px solid #e5e7eb"></div>
<div class="a" style="left:252px;top:838px;width:872px;height:60px;border-radius:12px;border:1px solid #e5e7eb;background:#fff"></div>
<div class="t" id="ph" style="left:267.80px;top:854px;font-size:13.5px;letter-spacing:-0.525px;color:#6b7280">Type your message... (Enter to send, Shift+Enter for new line)</div>
<div class="a" style="left:1134px;top:862px;width:36px;height:36px;border-radius:50%;background:#a5bdfc"></div>
<svg style="left:1130px;top:855px" width="45" height="45" viewBox="1130 855 45 45"><path d="M1158.6 873L1146 877.2L1151.7 879.6L1154.1 885.1Z M1158.6 873L1151.7 879.6" fill="none" stroke="#fff" stroke-width="1.1" stroke-linejoin="round" stroke-linecap="round"/></svg>
<div class="a" style="left:0;top:0;width:1192px;height:913px;pointer-events:none;border-radius:7px 7px 5px 5px;box-shadow:0 0 0 6px #8a8a8a;border-bottom:1px solid #8a8a8a"></div>
</body></html>
